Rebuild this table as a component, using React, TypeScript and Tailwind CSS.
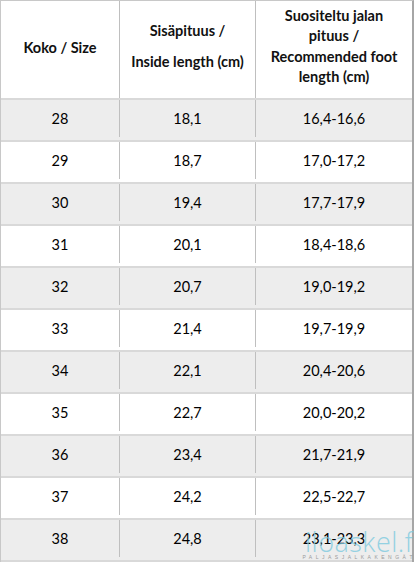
import React from "react";

const rows = [
  ["28", "18,1", "16,4-16,6"],
  ["29", "18,7", "17,0-17,2"],
  ["30", "19,4", "17,7-17,9"],
  ["31", "20,1", "18,4-18,6"],
  ["32", "20,7", "19,0-19,2"],
  ["33", "21,4", "19,7-19,9"],
  ["34", "22,1", "20,4-20,6"],
  ["35", "22,7", "20,0-20,2"],
  ["36", "23,4", "21,7-21,9"],
  ["37", "24,2", "22,5-22,7"],
  ["38", "24,8", "23,1-23,3"],
];

export default function App() {
  return (
    <div
      className="relative w-[414px] h-[562px] bg-white overflow-hidden text-black"
      style={{ fontFamily: "Lato, 'Open Sans', sans-serif" }}
    >
      <div className="w-[414px] border-l border-t border-[#c8c8c8] border-r-2 border-r-[#a6a6a6]">
        {/* header */}
        <div className="flex h-[99px] border-b-2 border-[#d9d9d9] font-bold text-[14.5px] leading-[20.5px] text-[#111]">
          <div className="w-[119px] border-r border-[#bfbfbf] flex items-center justify-center pb-[2px]">
            Koko / Size
          </div>
          <div className="w-[136px] border-r border-[#bfbfbf] flex flex-col items-center justify-center gap-[11px] pb-[6px]">
            <div>Sisäpituus /</div>
            <div>Inside length (cm)</div>
          </div>
          <div className="w-[156px] flex flex-col items-center justify-center text-center pb-[6px]">
            <div>Suositeltu jalan</div>
            <div>pituus /</div>
            <div>Recommended foot</div>
            <div>length (cm)</div>
          </div>
        </div>
        {rows.map((r, i) => (
          <div
            key={r[0]}
            className={`flex h-[42px] border-b-2 border-[#d9d9d9] text-[14.5px] pb-[3px] ${
              i % 2 === 0 ? "bg-[#ededed]" : "bg-white"
            }`}
          >
            <div className="w-[119px] border-r border-[#bfbfbf] flex items-center justify-center">
              {r[0]}
            </div>
            <div className="w-[136px] border-r border-[#bfbfbf] flex items-center justify-center">
              {r[1]}
            </div>
            <div className="w-[156px] flex items-center justify-center">{r[2]}</div>
          </div>
        ))}
      </div>
      {/* watermark */}
      <div className="absolute right-[-6px] bottom-[2px] flex flex-col items-end pointer-events-none">
        <div
          className="text-[27px] leading-[24px] text-[#7fcbe0] opacity-80 tracking-[0.5px]"
          style={{ fontFamily: "'Open Sans', sans-serif", fontWeight: 300 }}
        >
          iloaskel.fi
        </div>
        <div
          className="text-[5px] leading-[6px] text-[#9a9a9a] tracking-[3.5px] mr-[4px]"
          style={{ fontFamily: "'Liberation Sans', sans-serif" }}
        >
          PALJASJALKAKENGÄT
        </div>
      </div>
    </div>
  );
}
